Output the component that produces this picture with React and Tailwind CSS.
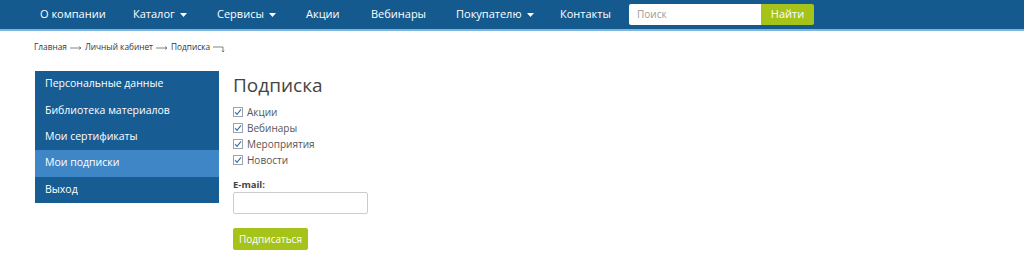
import React from "react";

const Caret = () => (
  <svg width="7" height="4" viewBox="0 0 7 4" className="ml-[5px] inline-block">
    <path d="M0 0h7L3.5 4z" fill="#fff" />
  </svg>
);

const Arrow = () => (
  <svg width="12" height="6" viewBox="0 0 12 6" className="mx-[3px]">
    <path d="M0 3H11M9 1.5L11 3L9 4.5" stroke="#666" strokeWidth="0.8" fill="none" />
  </svg>
);

const Hook = () => (
  <svg width="12" height="8" viewBox="0 0 12 8" className="ml-[3px] mt-[2px]">
    <path d="M0 2H10V7M8.8 5.6L10 7L11.2 5.6" stroke="#666" strokeWidth="0.8" fill="none" />
  </svg>
);

const Check = () => (
  <span className="w-[10px] h-[10px] border border-[#9aa4ad] bg-white flex items-center justify-center">
    <svg width="8" height="8" viewBox="0 0 8 8">
      <path d="M1 4.2L3 6.3L7 1.3" stroke="#3a6fa0" strokeWidth="1.1" fill="none" />
    </svg>
  </span>
);

export default function App() {
  const nav = [
    ["О компании", false, "w-[93px]"],
    ["Каталог", true, "w-[84px]"],
    ["Сервисы", true, "w-[89px]"],
    ["Акции", false, "w-[65px]"],
    ["Вебинары", false, "w-[85px]"],
    ["Покупателю", true, "w-[104px]"],
    ["Контакты", false, "w-[69px]"],
  ];
  const side = ["Персональные данные", "Библиотека материалов", "Мои сертификаты", "Мои подписки", "Выход"];
  const checks = ["Акции", "Вебинары", "Мероприятия", "Новости"];
  return (
    <div className="w-[1024px] h-[259px] bg-white font-['Open_Sans',sans-serif] overflow-hidden">
      <div className="h-[29px] bg-[#155a8e] border-b-2 border-[#7fb6de] box-content flex items-center pl-[40px]">
        {nav.map(([t, c, w]) => (
          <div key={t} className={`${w} text-white text-[11px] flex items-center`}>
            {t}
            {c && <Caret />}
          </div>
        ))}
        <div className="flex h-[21px]">
          <div className="w-[132px] bg-white rounded-l-[2px] text-[10px] text-[#9a9a9a] pl-[8px] flex items-center">Поиск</div>
          <div className="w-[53px] bg-[#a6c31a] rounded-r-[2px] text-white text-[11px] flex items-center justify-center">Найти</div>
        </div>
      </div>
      <div className="pl-[34px] pt-[12px] text-[8.3px] text-[#333] flex items-center h-[21px]">
        <span>Главная</span>
        <Arrow />
        <span>Личный кабинет</span>
        <Arrow />
        <span>Подписка</span>
        <Hook />
      </div>
      <div className="flex pl-[35px] pt-[19px]">
        <div className="w-[184px] h-[132px] bg-[#175c93] flex flex-col">
          {side.map((s, i) => (
            <div
              key={s}
              className={`h-[26.4px] flex items-center pl-[10px] text-white text-[10.5px] ${i === 3 ? "bg-[#3f86c6]" : ""}`}
            >
              {s}
            </div>
          ))}
        </div>
        <div className="ml-[14px] flex flex-col">
          <div className="text-[19px] text-[#444] leading-[24px] mt-[2px]">Подписка</div>
          <div className="mt-[10px] flex flex-col gap-[6px]">
            {checks.map((c) => (
              <div key={c} className="flex items-center gap-[4px] text-[10px] text-[#555] leading-[10px] h-[10px]">
                <Check />
                {c}
              </div>
            ))}
          </div>
          <div className="mt-[14px] text-[9.5px] leading-[12px] font-bold text-[#444]">E-mail:</div>
          <div className="mt-[1px] w-[135px] h-[22px] border border-[#ccc] rounded-[2px]" />
          <div className="mt-[14px] w-[75px] h-[22px] bg-[#a6c31a] rounded-[2px] text-white text-[10px] flex items-center justify-center">
            Подписаться
          </div>
        </div>
      </div>
    </div>
  );
}
